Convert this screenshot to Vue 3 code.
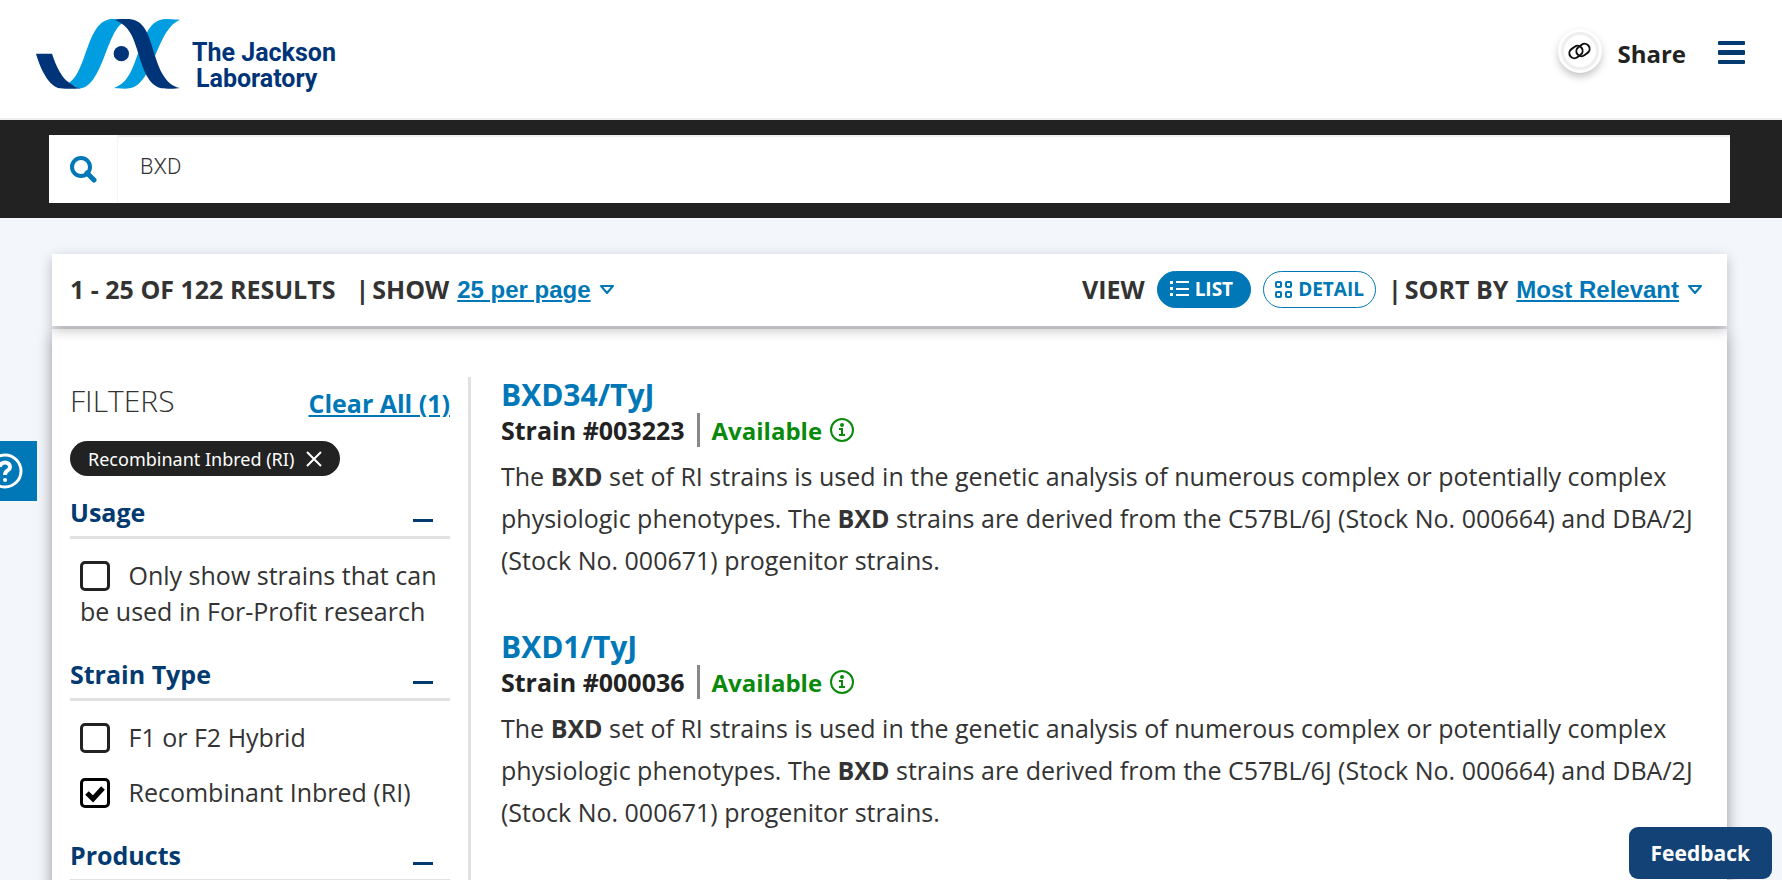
<script setup>
import { ref } from 'vue'

const query = ref('BXD')
const perPage = ref('25 per page')
const sortBy = ref('Most Relevant')
const view = ref('list')

const sections = ref([
  {
    title: 'Usage',
    open: true,
    options: [{ label: 'Only show strains that can be used in For-Profit research', checked: false }]
  },
  {
    title: 'Strain Type',
    open: true,
    options: [
      { label: 'F1 or F2 Hybrid', checked: false },
      { label: 'Recombinant Inbred (RI)', checked: true }
    ]
  },
  { title: 'Products', open: true, options: [] }
])

const strains = [
  { name: 'BXD34/TyJ', number: '003223' },
  { name: 'BXD1/TyJ', number: '000036' }
]

function clearAll() {
  sections.value.forEach((s) => s.options.forEach((o) => (o.checked = false)))
}
</script>

<template>
  <div class="page">
    <header class="header">
      <a href="#" class="logo" aria-label="The Jackson Laboratory">
        <svg class="logo-mark" viewBox="108 57 432 210" aria-hidden="true">
          <path fill="#009de0" d="M205 250C262 218 258 62 335 57L385 58L366 70C318 104 306 262 238 266Z" />
          <path fill="#009de0" d="M342 264C398 244 402 180 432 115C450 76 466 57 500 57L540 59C500 76 482 130 465 168C434 240 415 266 375 266Z" />
          <path fill="#003478" d="M108 161H156C168 197 184 234 210 250Q224 262 240 265Q215 268 180 265C148 260 122 210 108 161Z" />
          <path fill="#003478" d="M345 60C355 57 380 56 392 58C440 63 450 122 466 170C480 215 500 256 540 264C528 267 500 267 484 265C440 255 426 195 411 148C399 110 388 78 345 60Z" />
          <circle fill="#003478" cx="364" cy="161" r="23" />
        </svg>
        <span class="logo-text">
          <span>The Jackson</span>
          <span class="logo-second">Laboratory</span>
        </span>
      </a>
      <div class="header-right">
        <button class="share">
          <span class="share-icon">
            <svg width="24" height="20" viewBox="0 0 24 20" fill="none" stroke="#111" stroke-width="2">
              <rect x="-7" y="-5" width="14" height="10" rx="5" transform="translate(8 11) rotate(-36)" />
              <rect x="-7" y="-5" width="14" height="10" rx="5" transform="translate(15 9) rotate(-36)" />
            </svg>
          </span>
          Share
        </button>
        <button class="menu" aria-label="Menu">
          <svg width="27" height="24" viewBox="0 0 27 24" fill="#033a70">
            <rect y="0" width="27" height="4" rx="1" />
            <rect y="9" width="27" height="5" rx="1" />
            <rect y="19" width="27" height="4" rx="1" />
          </svg>
        </button>
      </div>
    </header>

    <div class="search-bar">
      <form class="search" @submit.prevent>
        <button class="search-btn" aria-label="Search">
          <svg width="28" height="28" viewBox="0 0 28 28" fill="none" stroke="#0077b6">
            <circle cx="12" cy="12" r="9" stroke-width="4" />
            <path d="M18 18L25 25" stroke-width="5" stroke-linecap="round" />
          </svg>
        </button>
        <input v-model="query" type="text" aria-label="Search strains" />
      </form>
    </div>

    <main class="content">
      <div class="toolbar">
        <div class="tools tools-left">
          <span class="count">1 - 25 OF 122 RESULTS</span>
          <label class="tool">
            <span class="tool-name"><span>|</span>SHOW</span>
            <select v-model="perPage">
              <option>25 per page</option>
              <option>50 per page</option>
            </select>
            <svg class="caret" width="16" height="12" viewBox="0 0 16 12"><path d="M2 3H14L8 10Z" /></svg>
          </label>
        </div>
        <div class="tools">
          <div class="views">
            <span>VIEW</span>
            <button class="view-btn" :class="{ active: view === 'list' }" @click="view = 'list'">
              <svg width="19" height="16" viewBox="0 0 19 16" fill="currentColor">
                <rect width="3" height="3" /><rect x="6" width="13" height="2" />
                <rect y="6" width="3" height="3" /><rect x="6" y="7" width="13" height="2" />
                <rect y="12" width="3" height="3" /><rect x="6" y="13" width="13" height="2" />
              </svg>
              LIST
            </button>
            <button class="view-btn" :class="{ active: view === 'detail' }" @click="view = 'detail'">
              <svg width="17" height="17" viewBox="0 0 17 17" fill="none" stroke="currentColor" stroke-width="2">
                <rect x="1" y="1" width="5" height="5" rx="1" /><rect x="11" y="1" width="5" height="5" rx="1" />
                <rect x="1" y="11" width="5" height="5" rx="1" /><rect x="11" y="11" width="5" height="5" rx="1" />
              </svg>
              DETAIL
            </button>
          </div>
          <label class="tool">
            <span class="tool-name"><span>|</span>SORT BY</span>
            <select v-model="sortBy">
              <option>Most Relevant</option>
              <option>Name</option>
            </select>
            <svg class="caret" width="16" height="12" viewBox="0 0 16 12"><path d="M2 3H14L8 10Z" /></svg>
          </label>
        </div>
      </div>

      <div class="panel">
        <aside class="filters">
          <div class="filters-head">
            <h2>FILTERS</h2>
            <a href="#" @click.prevent="clearAll">Clear All (1)</a>
          </div>
          <button class="chip">
            Recombinant Inbred (RI)
            <svg width="16" height="16" viewBox="0 0 16 16" stroke="#fff" stroke-width="2"><path d="M1 1L15 15M15 1L1 15" /></svg>
          </button>
          <section v-for="section in sections" :key="section.title" class="group">
            <h3>
              <button @click="section.open = !section.open">
                {{ section.title }}
                <span class="minus"></span>
              </button>
            </h3>
            <div v-if="section.open" class="options">
              <label v-for="option in section.options" :key="option.label">
                <input v-model="option.checked" type="checkbox" />
                {{ option.label }}
              </label>
            </div>
          </section>
        </aside>

        <div class="results">
          <article v-for="strain in strains" :key="strain.name">
            <h2><a href="#">{{ strain.name }}</a></h2>
            <div class="meta">
              <span class="number">Strain #{{ strain.number }}</span>
              <span class="available">
                Available
                <svg width="24" height="24" viewBox="0 0 24 24" fill="none" stroke="#0a8a0a" stroke-width="2">
                  <circle cx="12" cy="12" r="11" />
                  <path d="M9 11H12V17M9 17H15" />
                  <circle cx="12" cy="7" r="1" />
                </svg>
              </span>
            </div>
            <p>
              The <b>BXD</b> set of RI strains is used in the genetic analysis of numerous complex or potentially
              complex physiologic phenotypes. The <b>BXD</b> strains are derived from the C57BL/6J (Stock No.
              000664) and DBA/2J (Stock No. 000671) progenitor strains.
            </p>
          </article>
        </div>
      </div>
    </main>

    <button class="help" aria-label="Help">
      <svg width="36" height="36" viewBox="0 0 36 36" fill="none" stroke="#fff">
        <circle cx="18" cy="18" r="16" stroke-width="3" />
        <path d="M13 14C13 8 23 8 23 14C23 18 18 17 18 22" stroke-width="4" />
        <circle cx="18" cy="27" r="2" fill="#fff" stroke="none" />
      </svg>
    </button>
    <button class="feedback">Feedback</button>
  </div>
</template>

<style>
body {
  margin: 0;
  background: #f3f6fb;
}
</style>

<style scoped>
* {
  box-sizing: border-box;
}
.page {
  height: 100vh;
  overflow: hidden;
  font-family: 'Open Sans', 'Noto Sans', sans-serif;
  font-size: 25px;
  color: #333;
}
button {
  font: inherit;
  color: inherit;
  background: none;
  border: 0;
  padding: 0;
  cursor: pointer;
}
svg {
  flex: none;
}
h2,
h3,
p {
  margin: 0;
}

.header {
  display: flex;
  justify-content: space-between;
  align-items: flex-start;
  padding: 19px 37px 25px 36px;
  background: #fff;
  border-bottom: 2px solid #eee;
}
.logo {
  display: flex;
  gap: 12px;
  height: 74px;
  color: #003478;
  text-decoration: none;
}
.logo-mark {
  width: 144px;
  height: 70px;
}
.logo-text {
  display: flex;
  flex-direction: column;
  padding-top: 21px;
  font: 700 25px/26px Roboto, sans-serif;
}
.logo-second {
  padding-left: 4px;
}
.header-right {
  display: flex;
  align-items: center;
  gap: 32px;
  padding-top: 13px;
}
.share {
  display: flex;
  align-items: center;
  gap: 18px;
  font-size: 24px;
  font-weight: 700;
  color: #222;
}
.share-icon {
  display: flex;
  align-items: center;
  justify-content: center;
  width: 38px;
  height: 38px;
  margin-bottom: 4px;
  border: 3px solid #eee;
  border-radius: 50%;
  background: #fff;
  box-shadow: 0 0 0 3px #fff, 0 4px 8px 2px #bbb;
}
.menu {
  display: flex;
}

.search-bar {
  padding: 15px 52px 15px 49px;
  background: #222;
}
.search {
  display: flex;
  height: 68px;
  background: #fff;
}
.search-btn {
  display: flex;
  align-items: center;
  justify-content: center;
  width: 69px;
  border-right: 1px solid #f5f5f5;
}
.search input {
  flex: 1;
  min-width: 0;
  padding: 0 22px 6px;
  border: 0;
  outline: 0;
  font: 300 22px Roboto, sans-serif;
  color: #333;
  box-shadow: inset 0 2px 1px #eee;
}

.content {
  padding: 36px 55px 0 52px;
}
.toolbar {
  position: relative;
  display: flex;
  justify-content: space-between;
  align-items: center;
  min-height: 72px;
  padding: 0 24px 2px 18px;
  background: #fff;
  box-shadow: 0 4px 12px rgba(0, 0, 0, 0.24);
  font-weight: 700;
}
.tools,
.views,
.tool {
  display: flex;
  align-items: center;
}
.tools,
.views {
  gap: 12px;
}
.tools-left {
  gap: 20px;
}
.tool {
  gap: 8px;
}
.tool-name {
  display: flex;
  gap: 3px;
}
select {
  appearance: none;
  field-sizing: content;
  padding: 0;
  border: 0;
  background: none;
  font: 700 24px 'Liberation Sans', sans-serif;
  color: #0077b6;
  text-decoration: underline;
}
.caret {
  fill: none;
  stroke: #0077b6;
  stroke-width: 2;
  stroke-linejoin: round;
}
.view-btn {
  display: flex;
  align-items: center;
  gap: 6px;
  height: 37px;
  padding: 0 11px;
  border: 1px solid #0077b6;
  border-radius: 19px;
  font-size: 19px;
  color: #0077b6;
}
.view-btn.active {
  padding: 0 17px 0 12px;
  background: #0077b6;
  color: #fff;
}

.panel {
  display: flex;
  margin-top: 3px;
  padding: 48px 24px 0 18px;
  background: #fff;
  box-shadow: 0 4px 14px rgba(0, 0, 0, 0.4);
}
.filters {
  flex: none;
  width: 401px;
  padding-right: 18px;
  border-right: 3px solid #e1e1e1;
}
.filters-head {
  display: flex;
  justify-content: space-between;
  align-items: center;
  height: 52px;
}
.filters-head h2 {
  font-size: 30px;
  line-height: 48px;
  font-weight: 300;
  padding-bottom: 4px;
}
.filters-head a {
  font-weight: 700;
  color: #0077b6;
}
.chip {
  display: flex;
  align-items: center;
  gap: 12px;
  height: 35px;
  margin: 12px 0;
  padding: 0 18px;
  border-radius: 18px;
  background: #222;
  color: #fff;
  font-family: 'Noto Sans', sans-serif;
  font-size: 18px;
}
.group h3 {
  border-bottom: 3px solid #e1e1e1;
  font-size: 25px;
  line-height: 36px;
}
.group h3 button {
  display: flex;
  justify-content: space-between;
  align-items: center;
  width: 100%;
  height: 48px;
  padding: 0 17px 0 0;
  color: #033a70;
}
.minus {
  width: 20px;
  height: 3px;
  margin-top: 16px;
  background: #033a70;
}
.options {
  display: flex;
  flex-direction: column;
  gap: 19px;
  padding: 18px 10px 21px;
  line-height: 36px;
}
input[type='checkbox'] {
  appearance: none;
  width: 30px;
  height: 30px;
  margin: 0 12px 0 0;
  border: 3px solid #222;
  border-radius: 5px;
  vertical-align: -6px;
}
input[type='checkbox']:checked {
  border-color: #000;
  background: url("data:image/svg+xml,%3Csvg xmlns='http://www.w3.org/2000/svg' viewBox='0 0 24 24'%3E%3Cpath d='M4 12L10 18L20 7' fill='none' stroke='black' stroke-width='5'/%3E%3C/svg%3E") center / 24px no-repeat;
}

.results {
  flex: 1;
  padding-left: 30px;
  min-height: 600px;
}
.results article {
  margin-bottom: 48px;
}
.results h2 {
  font-size: 30px;
  line-height: 36px;
  font-weight: 700;
}
.results h2 a {
  color: #0077b6;
  text-decoration: none;
}
.meta {
  display: flex;
  align-items: center;
  height: 34px;
  font-weight: 700;
}
.number {
  padding-right: 12px;
  border-right: 3px solid #888;
  color: #222;
}
.available {
  display: flex;
  align-items: center;
  gap: 8px;
  padding-left: 12px;
  font-size: 24px;
  color: #0a8a0a;
}
.results p {
  padding-top: 8px;
  line-height: 42px;
}

.help {
  position: fixed;
  left: 0;
  top: 441px;
  display: flex;
  align-items: center;
  justify-content: flex-end;
  width: 37px;
  height: 60px;
  padding-right: 14px;
  overflow: hidden;
  background: #0077b6;
}
.feedback {
  position: fixed;
  right: 10px;
  bottom: 1px;
  height: 52px;
  padding: 0 22px;
  border-radius: 9px;
  background: #124276;
  color: #fff;
  font-size: 21px;
  font-weight: 700;
}
</style>
